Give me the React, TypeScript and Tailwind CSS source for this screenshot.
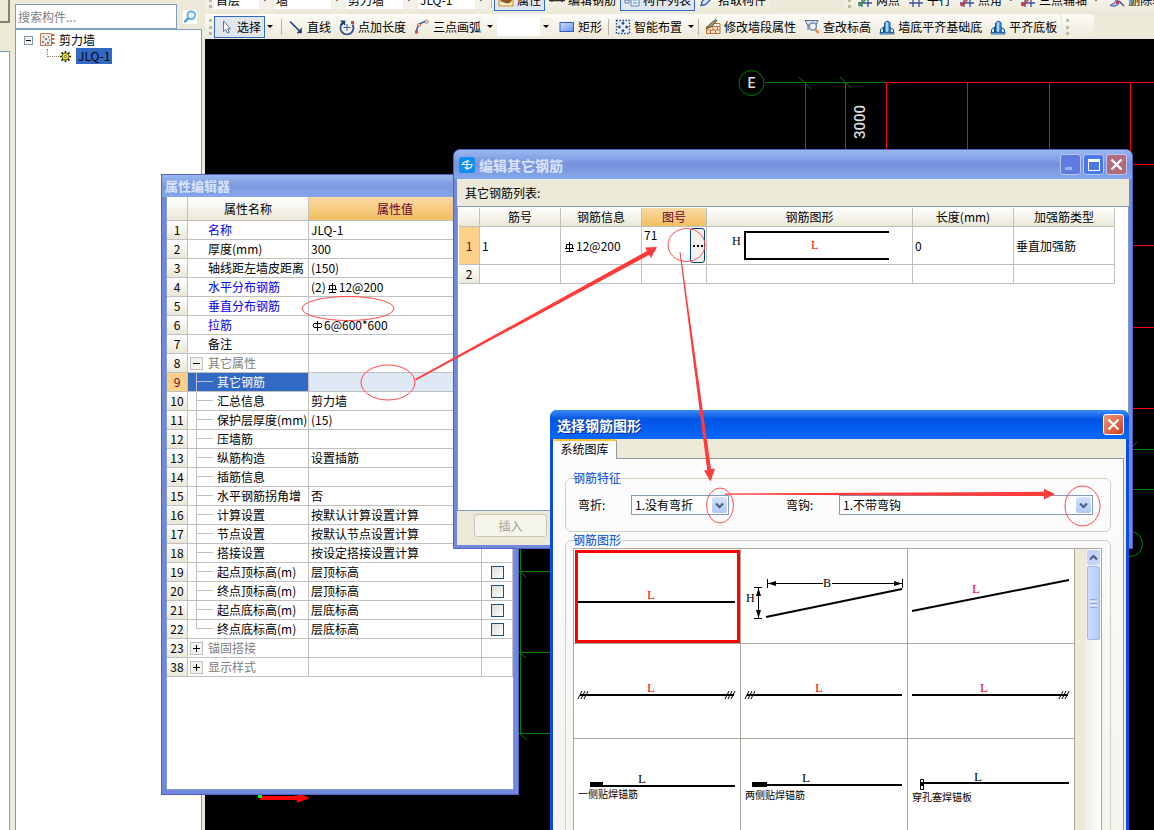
import type { ReactNode } from "react";
import clsx from "clsx";

const FONT = "font-['Noto_Sans_CJK_SC','Liberation_Sans',sans-serif]";

/* ---------- small icons ---------- */

function Icon({ children, size = 16 }: { children: ReactNode; size?: number }) {
  return (
    <svg width={size} height={size} viewBox="0 0 16 16" fill="none" className="shrink-0" aria-hidden="true">
      {children}
    </svg>
  );
}

const CursorIcon = () => (
  <Icon>
    <path d="M5.500 2v10.500l2.300-2.100 1.500 3.600 1.900-.8-1.600-3.500h2.900z" fill="#fff" stroke="#5f7693" />
  </Icon>
);
const LineIcon = () => (
  <Icon>
    <path d="M2 2.500l10 10" stroke="#1f3f77" strokeWidth="1.600" />
    <path d="M13.800 14.200H8.500l5.300-5.600z" fill="#1f3f77" />
  </Icon>
);
const PointLengthIcon = () => (
  <Icon>
    <path d="M3.600 4A6.500 6.500 0 1 0 13.500 5.500" stroke="#33508f" strokeWidth="1.800" />
    <path d="M1 1.500h5.200V7L4.500 5 2.600 6.800 1 5.200l2-1.700z" fill="#1f3f77" />
    <path d="M8 5v7M4.500 8.500h7" stroke="#3c5c94" />
    <rect x="12" y="2" width="3" height="3" fill="#c8453a" />
  </Icon>
);
const ArcIcon = () => (
  <Icon>
    <path d="M2.500 13.500C2.500 7 6 3 13 2.500" stroke="#2d6cc0" strokeWidth="1.500" />
    <circle cx="12.500" cy="2.700" r="1.500" fill="#fff" stroke="#d2502f" />
    <circle cx="5" cy="6" r="1.500" fill="#fff" stroke="#d2502f" />
    <rect x="1" y="11.500" width="3" height="3" fill="#d2502f" />
  </Icon>
);
const RectIcon = () => (
  <Icon>
    <defs>
      <linearGradient id="rectFill" x1="0" y1="0" x2="1" y2="1">
        <stop stopColor="#d2e2ff" />
        <stop offset="1" stopColor="#5f93f2" />
      </linearGradient>
    </defs>
    <rect x="1" y="3.500" width="13.500" height="9" fill="url(#rectFill)" stroke="#355fc0" />
  </Icon>
);
const SmartIcon = () => (
  <Icon>
    <rect x="1.500" y="1.500" width="13" height="13" fill="#e2eefb" stroke="#264a86" strokeDasharray="1.500 1.500" strokeWidth="1.400" />
    <path d="M8 2.500l1.800 2.200H6.200zM8 13.500l1.800-2.200H6.200zM2.500 8l2.200-1.800v3.600zM13.500 8l-2.200-1.800v3.600z" fill="#1b2f55" />
    <path d="M8 4v2M8 10v2M4 8h2M10 8h2" stroke="#1b2f55" />
  </Icon>
);
const BrickIcon = () => (
  <Icon>
    <path d="M1.500 7.500h13.500v7H1.500z" fill="#fbe9d6" stroke="#c96d35" />
    <path d="M1.500 11h13.500M5.500 11v3.500M10.500 11v3.500M8 7.500V11M12.500 7.500V11M7 4.500h8v3" stroke="#c96d35" />
    <path d="M10.500.5L4 6l-2.500 3.500L6 8l6-6.300z" fill="#a8a27a" stroke="#3c3a2a" strokeWidth=".9" />
  </Icon>
);
const InspectIcon = () => (
  <Icon>
    <path d="M1 1.500h13l-2 4.500H3.500z" fill="#d9e0ee" stroke="#59688c" />
    <path d="M4 6v5" stroke="#59688c" />
    <circle cx="8.800" cy="7.500" r="3.600" fill="#eaf4ff" stroke="#5f80b5" strokeWidth="1.300" />
    <path d="M11.300 10.500l3.200 3.500" stroke="#e0832c" strokeWidth="2.400" />
  </Icon>
);
const AlignIcon = () => (
  <Icon>
    <path d="M1.500 13.500v-3l3-2.500v5.500zM11 8.500l3.500 2v3H11z" fill="#cfe6fa" stroke="#12508f" />
    <path d="M5.500 13V4l2.500-2 3 1.500V13z" fill="#4f9be2" stroke="#12508f" />
    <path d="M8 3v10" stroke="#cfe8ff" strokeWidth="1.400" />
    <path d="M1 13.500h14v1.500H1z" fill="#9fcbf2" stroke="#12508f" strokeWidth=".8" />
  </Icon>
);
const PropertyIcon = () => (
  <Icon>
    <rect x="1" y="2" width="14" height="12" fill="#fde7a4" stroke="#c98f2c" />
    <path d="M2 9l4-4 3 3 3-2 2 3-4 3z" fill="#8a5b22" />
    <path d="M4 12h8" stroke="#fff" />
  </Icon>
);
const RebarIcon = () => (
  <Icon>
    <path d="M0 8.500h16M3 6v4M13 5v5" stroke="#33312c" strokeWidth="1.400" />
    <path d="M5 5h5" stroke="#4e8f3a" strokeWidth="2" />
  </Icon>
);
const ListIcon = () => (
  <Icon>
    <path d="M1 2h4v3H1zM1 8h4v3H1z" stroke="#5f80b5" />
    <path d="M7 1.500h8v12.500H7z" fill="#e8f1fc" stroke="#5f80b5" />
    <path d="M9 5h4M9 8h4M9 11h4" stroke="#5f80b5" />
  </Icon>
);
const DropperIcon = () => (
  <Icon>
    <path d="M2 13.500l1-4L11 2l3 3-7.500 7.500z" fill="#dbe9fb" stroke="#2f67b8" strokeWidth="1.400" />
  </Icon>
);
const GridIcon = ({ accent }: { accent?: string }) => (
  <Icon>
    <path d="M5 1v14M11 1v14M1 5h14M1 11h14" stroke="#3b4f9b" strokeWidth="1.300" />
    {accent && <path d="M2 14L13 3" stroke={accent} strokeWidth="1.600" />}
    {accent && <circle cx="3" cy="12.500" r="1.800" fill={accent} />}
  </Icon>
);
const EraseIcon = () => (
  <Icon>
    <path d="M1 13.500c3-2 4-2 6-5l3 3c-2 3-5 3-9 2z" fill="#a9c6ee" stroke="#3b4f9b" />
    <path d="M8 9l5-7M10 9l5 5" stroke="#3b4f9b" strokeWidth="1.500" />
    <rect x="7" y="9" width="3" height="3" fill="#c33a5c" />
  </Icon>
);

const Grade3 = () => (
  <svg width="11" height="12" viewBox="0 0 11 12" fill="none" stroke="#000" aria-label="Ⅲ" className="mx-px inline-block align-[-2px]">
    <path d="M2.500 3.500h6v4h-6zM5.500 1v9.500M1 7.500h9M2 10.500h7" />
  </svg>
);
const Grade1 = () => (
  <svg width="11" height="12" viewBox="0 0 11 12" fill="none" stroke="#000" aria-label="Ⅰ" className="mx-px inline-block align-[-2px]">
    <path d="M2 3.500h7l1 2-1 2H2l-1-2zM5.500 1v10" />
  </svg>
);

function Chevron({ up = false }: { up?: boolean }) {
  return (
    <svg width="9" height="9" viewBox="0 0 9 9" fill="none" stroke="#4d6185" strokeWidth="2.200" aria-hidden="true">
      <path d={up ? "M1 6.500L4.500 3 8 6.500" : "M1 2.500L4.500 6 8 2.500"} />
    </svg>
  );
}

/* ---------- toolbars ---------- */

const Caret = () => (
  <span className="mx-0.5 h-0 w-0 shrink-0 border-x-[3px] border-t-[3px] border-x-transparent border-t-black" />
);
const Gripper = () => <span className="mr-0.5 ml-1 h-4 w-[3px] shrink-0 border-l-[3px] border-dotted border-[#bdb9a8]" />;
const Separator = () => <span className="mx-0.5 h-4 w-px shrink-0 bg-[#b9b5a4]" />;

function Tool({ icon, label, active, caret }: { icon: ReactNode; label: string; active?: boolean; caret?: boolean }) {
  return (
    <>
      <button
        className={clsx(
          "flex h-[22px] shrink-0 items-center gap-[3px] border px-[3px]",
          active ? "border-[#316ac5] bg-[#e1e6ef]" : "border-transparent",
        )}
      >
        {icon}
        {label}
      </button>
      {caret && <Caret />}
    </>
  );
}

function Combo({ label, value, className }: { label: string; value: string; className: string }) {
  return (
    <span className={clsx("relative mr-[3px] flex h-[18px] shrink-0 items-center bg-white", className)}>
      <select aria-label={label} className="h-full w-full appearance-none bg-transparent pl-0.5 outline-none">
        <option>{value}</option>
      </select>
      <span className="pointer-events-none absolute inset-y-0 right-0 flex w-3 items-center justify-center bg-[#f4f2e8]">
        <Caret />
      </span>
    </span>
  );
}

const BAND = "bg-linear-to-b from-[#fdfcf8] to-[#ece9d8] rounded-r-sm";

function Toolbars() {
  return (
    <header className="shrink-0 bg-[#ece9d8] whitespace-nowrap">
      <div className="flex h-[13px] items-end overflow-hidden">
        <div className={clsx("flex h-[27px] shrink-0 items-center", BAND)}>
          <Gripper />
          <Combo label="楼层" value="首层" className="w-[57px]" />
          <Combo label="构件类别" value="墙" className="w-[69px]" />
          <Combo label="构件类型" value="剪力墙" className="w-[69px]" />
          <Combo label="构件" value="JLQ-1" className="w-[69px]" />
          <span className="mr-0.5 ml-px h-4 w-px bg-[#b9b5a4]" />
          <Tool icon={<PropertyIcon />} label="属性" active />
          <Tool icon={<RebarIcon />} label="编辑钢筋" />
          <Tool icon={<ListIcon />} label="构件列表" active />
          <Tool icon={<DropperIcon />} label="拾取构件" />
        </div>
        <div className={clsx("ml-[74px] flex h-[27px] shrink-0 items-center", BAND)}>
          <Gripper />
          <Tool icon={<GridIcon accent="#3a9a33" />} label="两点" />
          <Tool icon={<GridIcon />} label="平行" />
          <Tool icon={<GridIcon accent="#d0353a" />} label="点角" caret />
          <Tool icon={<GridIcon accent="#d0353a" />} label="三点辅轴" caret />
          <span className="w-1" />
          <Tool icon={<EraseIcon />} label="删除辅轴" />
        </div>
      </div>
      <div className="mt-px flex h-[25px] items-center overflow-hidden">
        <div className={clsx("flex h-full shrink-0 items-center", BAND)}>
          <Gripper />
          <Tool icon={<CursorIcon />} label="选择" active caret />
          <span className="w-1" />
          <Separator />
          <Tool icon={<LineIcon />} label="直线" />
          <Tool icon={<PointLengthIcon />} label="点加长度" />
          <Tool icon={<ArcIcon />} label="三点画弧" caret />
          <span className="w-0.5" />
          <Combo label="画法" value="" className="w-[55px]" />
          <Tool icon={<RectIcon />} label="矩形" />
          <Separator />
          <Tool icon={<SmartIcon />} label="智能布置" caret />
          <Separator />
          <Tool icon={<BrickIcon />} label="修改墙段属性" />
          <Tool icon={<InspectIcon />} label="查改标高" />
          <Tool icon={<AlignIcon />} label="墙底平齐基础底" />
          <Tool icon={<AlignIcon />} label="平齐底板" />
        </div>
        <div className={clsx("ml-px flex h-full w-8 shrink-0 items-center", BAND)}>
          <Gripper />
        </div>
      </div>
    </header>
  );
}

/* ---------- component tree ---------- */

function Sidebar() {
  return (
    <>
      <div className="flex w-[10px] shrink-0 flex-col bg-[#ece9d8]">
        <div className="h-[23px] border-r-2 border-b-2 border-[#85816f]" />
        <div className="h-7" />
        <div className="flex-1 border-t border-r border-[#7f9db9] bg-white" />
      </div>
      <aside className="ml-[5px] flex w-[187px] shrink-0 flex-col">
        <div className="mt-1 flex h-[25px] items-stretch">
          <input
            aria-label="搜索构件"
            placeholder="搜索构件..."
            className="min-w-0 flex-1 border border-[#7f9db9] bg-white pl-0.5 text-xs outline-none placeholder:text-[#808080]"
          />
          <button aria-label="搜索" className="flex w-[25px] items-center justify-center">
            <span className="flex h-[14px] w-[14px] items-center justify-center bg-white">
              <Icon size={14}>
                <circle cx="9.500" cy="6" r="4.500" fill="#e5f6ff" stroke="#57aee8" strokeWidth="2" />
                <path d="M6 9.500L1.500 14" stroke="#3a9ee6" strokeWidth="2.600" />
              </Icon>
            </span>
          </button>
        </div>
        <div className="flex-1 border border-b-0 border-[#7f9db9] bg-white">
          <div className="flex h-[18px] items-center pt-0.5 pl-2">
            <button aria-label="折叠" className="mr-1.5 flex h-[9px] w-[9px] items-center justify-center border border-[#7898b5] bg-[#f4f2ea]">
              <span className="h-px w-[5px] bg-black" />
            </button>
            <Icon>
              <path d="M1.500 1.500h11v12h-11z" fill="#e9e9e9" stroke="#c07a50" />
              <path d="M3 10h2M6 7h2M4 5h1M8 11h2M9 5h1M6 12h1M10 8h1" stroke="#666" strokeWidth="1.400" />
              <path d="M12.500 3h3M12.500 7h3M12.500 11h3" stroke="#c8682f" strokeWidth="1.800" />
            </Icon>
            <span className="ml-1">剪力墙</span>
          </div>
          <div className="flex h-4 items-center pl-[31px]">
            <span className="mb-1.5 h-2 w-3 border-b border-l border-dotted border-[#848075]" />
            <Icon size={13}>
              <path d="M8 1v14M1 8h14M3 3l10 10M13 3L3 13" stroke="#2a2800" strokeWidth="2" />
              <circle cx="8" cy="8" r="4.300" fill="#ffe92e" stroke="#4b4500" />
              <circle cx="8" cy="8" r="1.500" fill="#fff" stroke="#4b4500" />
            </Icon>
            <span className="ml-1 h-4 bg-[#316ac5] px-0.5 leading-4">JLQ-1</span>
          </div>
        </div>
      </aside>
    </>
  );
}

/* ---------- drawing canvas, in page coordinates ---------- */

function Canvas() {
  return (
    <svg className="absolute inset-0 h-full w-full" aria-hidden="true">
      <g transform="translate(-205 -39)" fill="none" fontFamily="Roboto, sans-serif">
        <g stroke="#008000">
          <path d="M765 82.500H886M805.500 83V160M845.500 83V160M799 77l12 12M840 77l11 11" />
          <circle cx="751.500" cy="83" r="12.500" />
          <circle cx="1130" cy="544" r="12.500" />
          <path d="M1133 449.500h21M1133 446l4-4M1133 489.500h21" />
          <path d="M520.500 540V735M519 571.500h40M519 652.500h40M519 733.500h40M520 572l6 5M520 653l6 5M520 734l7 6" />
        </g>
        <path d="M886 82.500h268M886.500 83v77M967.500 83v77M1049.500 83v77M1130.500 83v77M1130 164.500h24M1130 245.500h24M1130 327.500h24M1130 408.500h24" stroke="#f00" />
        <text x="751.500" y="88" fill="#ddd" fontSize="14" fontWeight="500" textAnchor="middle">E</text>
        <text transform="translate(865 139) rotate(-90)" fill="#ddd" fontSize="15" fontWeight="500">3000</text>
        <text x="1127" y="549" fill="#ddd" fontSize="14">1</text>
        <path d="M260 798h38" stroke="#f00" strokeWidth="4" />
        <path d="M297 793l13 5-13 5z" fill="#f00" />
        <rect x="258" y="795" width="4" height="3" fill="#0f0" />
      </g>
    </svg>
  );
}

/* ---------- property editor ---------- */

type Row = { n: number; name: string; value?: ReactNode; kind?: "key" | "group" | "child"; open?: boolean; check?: boolean; last?: boolean };

const ROWS: Row[] = [
  { n: 1, name: "名称", value: "JLQ-1", kind: "key" },
  { n: 2, name: "厚度(mm)", value: "300" },
  { n: 3, name: "轴线距左墙皮距离", value: "(150)" },
  { n: 4, name: "水平分布钢筋", value: <>(2)<Grade3 />12@200</>, kind: "key" },
  { n: 5, name: "垂直分布钢筋", kind: "key" },
  { n: 6, name: "拉筋", value: <><Grade1 />6@600*600</>, kind: "key" },
  { n: 7, name: "备注" },
  { n: 8, name: "其它属性", kind: "group", open: true },
  { n: 9, name: "其它钢筋", kind: "child" },
  { n: 10, name: "汇总信息", value: "剪力墙", kind: "child" },
  { n: 11, name: "保护层厚度(mm)", value: "(15)", kind: "child" },
  { n: 12, name: "压墙筋", kind: "child" },
  { n: 13, name: "纵筋构造", value: "设置插筋", kind: "child" },
  { n: 14, name: "插筋信息", kind: "child" },
  { n: 15, name: "水平钢筋拐角增", value: "否", kind: "child" },
  { n: 16, name: "计算设置", value: "按默认计算设置计算", kind: "child" },
  { n: 17, name: "节点设置", value: "按默认节点设置计算", kind: "child" },
  { n: 18, name: "搭接设置", value: "按设定搭接设置计算", kind: "child" },
  { n: 19, name: "起点顶标高(m)", value: "层顶标高", kind: "child", check: true },
  { n: 20, name: "终点顶标高(m)", value: "层顶标高", kind: "child", check: true },
  { n: 21, name: "起点底标高(m)", value: "层底标高", kind: "child", check: true },
  { n: 22, name: "终点底标高(m)", value: "层底标高", kind: "child", check: true, last: true },
  { n: 23, name: "锚固搭接", kind: "group" },
  { n: 38, name: "显示样式", kind: "group" },
];

const HEAD = "border-r border-b border-[#c0c0c0] bg-linear-to-b from-white to-[#ebe8d8] p-0 text-center font-normal";
const HEAD_ON = "border-r border-b border-[#c0c0c0] bg-linear-to-b from-[#fad9a4] to-[#f2bf5c] p-0 text-center font-normal text-[#640032]";
const INDEX_ON = "border-r border-b border-[#c0c0c0] bg-[#fdd08a] p-0 text-center font-normal text-[#640032]";
const CELL = "border-r border-b border-[#c0c0c0] p-0";

function NameCell({ row }: { row: Row }) {
  const selected = row.n === 9;
  if (row.kind === "child") {
    return (
      <div className={clsx("flex h-[18px] items-stretch pl-2", selected && "bg-[#316ac5] text-white")}>
        <span className="flex w-[17px] flex-col">
          <span className="h-[9px] border-b border-l border-[#c0c0c0]" />
          <span className={clsx("flex-1", !row.last && "border-l border-[#c0c0c0]")} />
        </span>
        <span className="ml-1 leading-[18px]">{row.name}</span>
      </div>
    );
  }
  return (
    <div className={clsx("flex h-[18px] items-center", row.kind === "key" && "text-[#0000ee]", row.kind === "group" && "text-[#808080]")}>
      {row.kind === "group" ? (
        <button
          aria-label={row.open ? "折叠" : "展开"}
          className="mx-0.5 flex h-[13px] w-[13px] items-center justify-center border border-[#c0c0c0] bg-[#f3f2ec] text-black"
        >
          <svg width="7" height="7" viewBox="0 0 7 7" stroke="#000" aria-hidden="true">
            <path d={row.open ? "M0 3.500h7" : "M0 3.500h7M3.500 0v7"} />
          </svg>
        </button>
      ) : (
        <span className="w-[17px]" />
      )}
      <span className="ml-[3px] leading-[18px]">{row.name}</span>
    </div>
  );
}

function PropertyEditor() {
  return (
    <section className="absolute top-[174px] left-[161px] flex h-[621px] w-[358px] flex-col border border-[#5560c4] bg-[#7288dd] px-1 pb-1">
      <h2 className="-mx-1 h-[22px] bg-linear-to-b from-[#9ab9f0] via-[#7c98e1] to-[#85a7ea] pl-[3px] text-[13px] leading-[22px] font-bold text-[#dbe5fa]">
        属性编辑器
      </h2>
      <div className="flex-1 border border-t-0 border-[#7f9db9] bg-white">
        <table className="w-[346px] table-fixed border-separate border-spacing-0 whitespace-nowrap">
          <colgroup>
            <col className="w-[21px]" />
            <col className="w-[121px]" />
            <col className="w-[173px]" />
            <col />
          </colgroup>
          <thead>
            <tr className="h-6">
              <td className={HEAD} />
              <th className={HEAD}>属性名称</th>
              <th className={HEAD_ON}>属性值</th>
              <td className={HEAD} />
            </tr>
          </thead>
          <tbody>
            {ROWS.map((row) => (
              <tr key={row.n} className="h-[19px] leading-[18px]">
                <th className={row.n === 9 ? INDEX_ON : HEAD}>{row.n}</th>
                <td className={CELL}>
                  <NameCell row={row} />
                </td>
                <td className={clsx(CELL, "pl-0.5", row.n === 9 && "bg-[#dfe8f5]")}>{row.value}</td>
                <td className={CELL}>
                  {row.check && (
                    <input
                      type="checkbox"
                      aria-label={row.name}
                      className="mx-auto block h-[13px] w-[13px] appearance-none border border-[#1c5180] bg-linear-to-br from-[#dcdcd7] to-white"
                    />
                  )}
                </td>
              </tr>
            ))}
          </tbody>
        </table>
      </div>
    </section>
  );
}

/* ---------- other rebar window ---------- */

const CAPTION = "flex h-[21px] w-[21px] items-center justify-center rounded-[3px] border border-[#b9c8f3]";

function OtherRebarWindow() {
  return (
    <section className="absolute top-[149px] left-[453px] flex h-[400px] w-[680px] flex-col rounded-t-[7px] border border-[#5560c4] bg-[#7288dd] px-[3px] pb-[3px]">
      <div className="-mx-[3px] flex h-[29px] shrink-0 items-center gap-0.5 rounded-t-md bg-linear-to-b from-[#9ab9f0] via-[#7891de] to-[#86a8ea] pr-[5px] pl-[5px]">
        <svg width="16" height="16" viewBox="0 0 16 16" aria-hidden="true">
          <rect width="16" height="16" rx="3" fill="#0d90f0" />
          <path d="M8 3.500v9.500M2.500 7.500h11M8 4.500c-3 0-4 1.500-4 3M8 3.500c1.500 0 2 .5 2 1.500M13 7.500c0 3-3 4-5 4-1.200 0-2-.5-2-1.500" fill="none" stroke="#fff" strokeWidth="1.200" />
        </svg>
        <h2 className="ml-0.5 flex-1 text-sm font-bold text-[#dbe5fa]">编辑其它钢筋</h2>
        <button aria-label="最小化" disabled className={clsx(CAPTION, "border-[#8e9fe6] bg-[#5f7ae0]")}>
          <span className="mt-2 mr-1 h-[3px] w-[7px] bg-[#9fb0ee]" />
        </button>
        <button aria-label="最大化" className={clsx(CAPTION, "bg-[#4a78e4]")}>
          <span className="h-3 w-3 border border-t-[3px] border-white" />
        </button>
        <button aria-label="关闭" className={clsx(CAPTION, "bg-[#b26a7c]")}>
          <svg width="13" height="13" viewBox="0 0 13 13" stroke="#fff" strokeWidth="2.400" aria-hidden="true">
            <path d="M1.500 1.500l10 10M11.500 1.500l-10 10" />
          </svg>
        </button>
      </div>
      <div className="flex flex-1 flex-col bg-[#ece9d8]">
        <p className="h-[27px] pl-2 leading-7">其它钢筋列表:</p>
        <div className="flex-1 border border-[#7f9db9] bg-white pt-px pl-px">
          <table className="w-[656px] table-fixed border-separate border-spacing-0 whitespace-nowrap">
            <colgroup>
              <col className="w-[21px]" />
              <col className="w-[81px]" />
              <col className="w-[81px]" />
              <col className="w-[65px]" />
              <col className="w-[206px]" />
              <col className="w-[101px]" />
              <col />
            </colgroup>
            <thead>
              <tr className="h-[19px] leading-[18px]">
                <td className={HEAD} />
                <th className={HEAD}>筋号</th>
                <th className={HEAD}>钢筋信息</th>
                <th className={HEAD_ON}>图号</th>
                <th className={HEAD}>钢筋图形</th>
                <th className={HEAD}>长度(mm)</th>
                <th className={HEAD}>加强筋类型</th>
              </tr>
            </thead>
            <tbody>
              <tr className="h-[38px] leading-4">
                <th className={INDEX_ON}>1</th>
                <td className={clsx(CELL, "pl-0.5")}>1</td>
                <td className={clsx(CELL, "pl-0.5")}>
                  <Grade3 />
                  12@200
                </td>
                <td className={CELL}>
                  <div className="flex h-[37px] items-start justify-between pl-0.5">
                    <span>71</span>
                    <button aria-label="选择图号" className="mt-px mr-px flex h-[35px] w-[15px] items-center justify-center gap-0.5 rounded-[3px] border border-[#003c74] bg-[#f3f2ec]">
                      <span className="h-0.5 w-0.5 bg-black" />
                      <span className="h-0.5 w-0.5 bg-black" />
                      <span className="h-0.5 w-0.5 bg-black" />
                    </button>
                  </div>
                </td>
                <td className={CELL}>
                  <svg width="205" height="37" viewBox="0 0 205 37" className="block" fontFamily="Liberation Serif, serif" fontSize="12">
                    <path d="M182 5H38v27h144" fill="none" stroke="#000" strokeWidth="2" />
                    <text x="25" y="18">H</text>
                    <text x="104" y="22" fill="#f00">L</text>
                  </svg>
                </td>
                <td className={clsx(CELL, "pl-0.5")}>0</td>
                <td className={clsx(CELL, "pl-0.5")}>垂直加强筋</td>
              </tr>
              <tr className="h-[19px] leading-[18px]">
                <th className={HEAD}>2</th>
                <td className={CELL} />
                <td className={CELL} />
                <td className={CELL} />
                <td className={CELL} />
                <td className={CELL} />
                <td className={CELL} />
              </tr>
            </tbody>
          </table>
        </div>
        <div className="flex h-[34px] shrink-0 items-start pt-[3px] pl-[17px]">
          <button disabled className="h-[23px] w-[73px] rounded-[3px] border border-[#c9c7ba] bg-[#f5f4ea] text-[#a1a192]">
            插入
          </button>
        </div>
      </div>
    </section>
  );
}

/* ---------- rebar shape picker ---------- */

function Hatch({ x }: { x: number }) {
  return <path d="M4 55l4-8M7 55l4-8M10 55l4-8" transform={`translate(${x} 0)`} stroke="#000" />;
}

const SHAPES: { label: string; art: ReactNode; caption?: string; pad?: string }[] = [
  {
    label: "L",
    art: (
      <>
        <path d="M0 49h157" stroke="#000" strokeWidth="2" />
        <text x="69" y="46" fill="#f00">L</text>
      </>
    ),
  },
  {
    label: "B H",
    art: (
      <>
        <path d="M25 68L161 40" stroke="#000" strokeWidth="2" />
        <path d="M26.500 30v9M161.500 30v9M27 34.500h55M91 34.500h70M17.500 39v30M13 38.500h8M13 69.500h8" stroke="#000" />
        <path d="M27 34.500l8-2.500v5zM161 34.500l-8-2.500v5zM17.500 39l-2.500 8h5zM17.500 69l-2.500-8h5z" fill="#000" />
        <text x="82" y="38" fontSize="12">B</text>
        <text x="5" y="53" fontSize="12">H</text>
      </>
    ),
  },
  {
    label: "L",
    art: (
      <>
        <path d="M4 62L161 31" stroke="#000" strokeWidth="2" />
        <text x="64" y="44" fill="#f00">L</text>
      </>
    ),
  },
  {
    label: "L",
    art: (
      <>
        <path d="M6 51h154" stroke="#000" strokeWidth="2" />
        <Hatch x={0} />
        <Hatch x={147} />
        <text x="73" y="48" fill="#f00">L</text>
      </>
    ),
  },
  {
    label: "L",
    art: (
      <>
        <path d="M6 51h155" stroke="#000" strokeWidth="2" />
        <Hatch x={0} />
        <text x="74" y="48" fill="#f00">L</text>
      </>
    ),
  },
  {
    label: "L",
    art: (
      <>
        <path d="M4 51h156" stroke="#000" strokeWidth="2" />
        <Hatch x={147} />
        <text x="72" y="48" fill="#f00">L</text>
      </>
    ),
  },
  {
    label: "一侧贴焊锚筋",
    caption: "一侧贴焊锚筋",
    pad: "pt-[47px]",
    art: (
      <>
        <path d="M16 47h145" stroke="#000" strokeWidth="2" />
        <path d="M16 43h13v4H16z" fill="#000" />
        <text x="64" y="44">L</text>
      </>
    ),
  },
  {
    label: "两侧贴焊锚筋",
    caption: "两侧贴焊锚筋",
    pad: "pt-12",
    art: (
      <>
        <path d="M11 46h150" stroke="#000" strokeWidth="2" />
        <path d="M11 43h15v5H11z" fill="#000" />
        <text x="61" y="43">L</text>
      </>
    ),
  },
  {
    label: "穿孔塞焊锚板",
    caption: "穿孔塞焊锚板",
    pad: "pt-[50px]",
    art: (
      <>
        <path d="M14 44h147" stroke="#000" strokeWidth="2" />
        <path d="M12.500 40.500h3v10h-3z" fill="none" stroke="#000" />
        <path d="M12 43h4v4h-4z" fill="#000" />
        <text x="66" y="42">L</text>
      </>
    ),
  },
];

function Dropdown({ id, value, className }: { id: string; value: string; className: string }) {
  return (
    <div className={clsx("relative h-5 border border-[#7f9db9] bg-white", className)}>
      <select id={id} className="block h-full w-full appearance-none bg-transparent pl-[3px] outline-none">
        <option>{value}</option>
      </select>
      <span className="pointer-events-none absolute inset-y-px right-px flex w-[15px] items-center justify-center rounded-xs bg-linear-to-b from-[#d5e1fd] to-[#b3c8f6]">
        <Chevron />
      </span>
    </div>
  );
}

function ShapeWindow() {
  return (
    <section className="absolute top-[410px] bottom-0 left-[550px] flex w-[579px] flex-col rounded-t-[7px] bg-[#0a4be0] px-[3px]">
      <div className="-mx-[3px] flex h-[29px] shrink-0 items-center rounded-t-[7px] bg-linear-to-b from-[#3b8ff7] via-[#0555e4] via-30% to-[#0468fb] pr-[5px] pl-[7px]">
        <h2 className="flex-1 text-sm font-bold text-white text-shadow-[1px_1px_0_#0a2f8c]">选择钢筋图形</h2>
        <button aria-label="关闭" className="flex h-[21px] w-[21px] items-center justify-center rounded-[3px] border border-white bg-linear-to-br from-[#ee9678] to-[#cc3a10]">
          <svg width="13" height="13" viewBox="0 0 13 13" stroke="#fff" strokeWidth="2.200" aria-hidden="true">
            <path d="M1.500 1.500l10 10M11.500 1.500l-10 10" />
          </svg>
        </button>
      </div>
      <div className="flex min-h-0 flex-1 flex-col bg-[#ece9d8]">
        <div role="tablist" className="flex h-5 shrink-0">
          <button role="tab" aria-selected="true" className="z-10 h-5 w-16 rounded-t-[3px] border-t-2 border-r border-t-[#ffc03c] border-r-[#919b9c] bg-[#fcfcfe] pb-0.5 leading-4">
            系统图库
          </button>
          <span className="mr-0.5 flex-1 border-b border-[#919b9c]" />
        </div>
        <div className="mr-0.5 min-h-0 flex-1 border-r border-[#919b9c] bg-linear-to-b from-[#fcfcfe] to-[#f4f3ee] pt-[11px] pr-3 pl-3">
          <fieldset className="h-[62px] min-w-0 rounded-md border border-[#d0d0bf] pl-3">
            <legend className="-ml-[5px] leading-4 text-[#0046d5]">钢筋特征</legend>
            <div className="flex items-center pt-[9px]">
              <label htmlFor="bend" className="w-[53px]">弯折:</label>
              <Dropdown id="bend" value="1.没有弯折" className="w-[98px]" />
              <label htmlFor="hook" className="ml-[57px] w-[53px]">弯钩:</label>
              <Dropdown id="hook" value="1.不带弯钩" className="mr-[17px] flex-1" />
            </div>
          </fieldset>
          <fieldset className="h-96 min-w-0 rounded-md border border-[#d0d0bf] pr-2 pl-[7px]">
            <legend className="leading-4 text-[#0046d5]">钢筋图形</legend>
            <div className="flex h-[364px] border border-[#aca899] bg-[#ece9d8]">
              <div className="grid w-[501px] auto-rows-[95px] grid-cols-3">
                {SHAPES.map((shape, i) => (
                  <button key={i} aria-label={shape.label} className="relative flex overflow-hidden border-r border-b border-[#aca899] bg-white">
                    <span className={clsx("block w-full text-left", i === 0 ? "mt-px ml-px h-[93px] border-[3px] border-[#f00]" : "h-full")}>
                      <svg width="166" height="94" viewBox="0 0 166 94" className="absolute inset-0" fill="none" fontFamily="Liberation Serif, serif" fontSize="13">
                        <g fill="#000" transform={i === 0 ? "translate(4 4)" : undefined}>{shape.art}</g>
                      </svg>
                      {shape.caption && <span className={clsx("block pl-1 text-[10px] leading-4", shape.pad)}>{shape.caption}</span>}
                    </span>
                  </button>
                ))}
              </div>
              <div className="ml-[11px] flex flex-1 flex-col bg-linear-to-r from-[#f0efe8] to-white">
                <button aria-label="向上滚动" className="m-px flex h-[15px] items-center justify-center rounded-xs bg-[#c3d3fb]">
                  <Chevron up />
                </button>
                <span className="mx-px flex h-[74px] flex-col items-center justify-center gap-px rounded-xs border border-[#9fb8ee] bg-linear-to-r from-[#cddbfd] to-[#b7cbfb]">
                  <span className="h-px w-[7px] bg-[#8eaaea]" />
                  <span className="h-px w-[7px] bg-[#eef3ff]" />
                  <span className="h-px w-[7px] bg-[#8eaaea]" />
                  <span className="h-px w-[7px] bg-[#eef3ff]" />
                  <span className="h-px w-[7px] bg-[#8eaaea]" />
                </span>
              </div>
            </div>
          </fieldset>
        </div>
      </div>
    </section>
  );
}

/* ---------- red markup over the windows ---------- */

function Markup() {
  return (
    <svg className="pointer-events-none absolute inset-0 h-full w-full" aria-hidden="true">
      <g fill="none" stroke="#ff4a4a">
        <ellipse cx="348" cy="308.500" rx="46" ry="12" />
        <ellipse cx="388" cy="382.500" rx="27" ry="17.500" />
        <ellipse cx="686.500" cy="245" rx="18.500" ry="16.500" />
        <ellipse cx="720" cy="505.500" rx="13.500" ry="17.500" />
        <ellipse cx="1082.500" cy="506" rx="17.500" ry="20" />
      </g>
      <g fill="#ff3b3b">
        <path d="M415 379l.8 1.600L649 255l2 3 6-11-12 .5 2 3.500z" />
        <path d="M679.500 252l1 0L711 469l4-.5-4.500 13-6.500-11 3.200-.4z" />
        <path d="M725 493.500v1.200l319 1.300v3.500l11-5.500-11-5.200v3z" />
      </g>
    </svg>
  );
}

export default function App() {
  return (
    <div className={clsx("relative flex h-screen overflow-hidden bg-[#ece9d8] text-xs text-black", FONT)}>
      <Sidebar />
      <div className="ml-[3px] flex min-w-0 flex-1 flex-col">
        <Toolbars />
        <main className="relative flex-1 overflow-hidden bg-black">
          <Canvas />
        </main>
      </div>
      <PropertyEditor />
      <OtherRebarWindow />
      <ShapeWindow />
      <Markup />
    </div>
  );
}
